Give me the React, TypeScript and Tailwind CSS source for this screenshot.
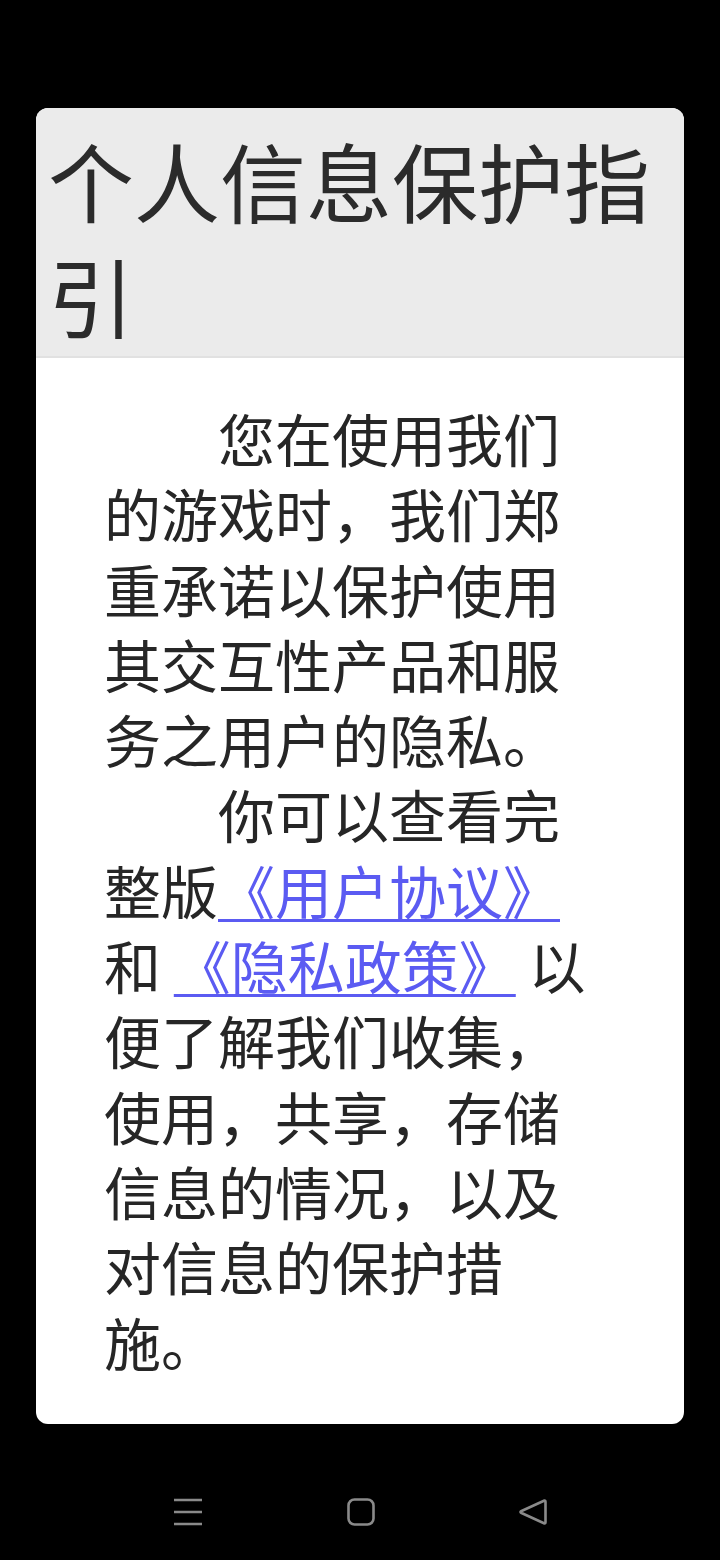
const cjk = "font-['Noto_Sans_CJK_SC','Noto_Sans',sans-serif]";

function NavBar() {
  return (
    <div className="flex items-center justify-center gap-[144px] pt-[74px]">
      <svg width="30" height="28" viewBox="0 0 30 28" fill="none" stroke="#8a8a8a" strokeWidth="2.6">
        <path d="M1 2h28M1 14h28M1 26h28" />
      </svg>
      <svg width="28" height="28" viewBox="0 0 28 28" fill="none" stroke="#8a8a8a" strokeWidth="2.6">
        <rect x="1.5" y="1.5" width="25" height="25" rx="6" />
      </svg>
      <svg width="28" height="28" viewBox="0 0 28 28" fill="none" stroke="#8a8a8a" strokeWidth="2.6" strokeLinejoin="round">
        <path d="M25.5 2.5 Q26.5 2.5 26.5 4 V24 Q26.5 25.5 25.5 25.5 L2 14.8 Q1 14 2 13.2 Z" />
      </svg>
    </div>
  );
}

export default function App() {
  return (
    <div className={`min-h-[1560px] bg-black ${cjk}`}>
      <div className="h-[108px]" />
      <div className="mx-[36px] overflow-hidden rounded-[12px] bg-white">
        <div className="border-b-[2px] border-[#e1e1e1] bg-[#ebebeb] px-[12px] pt-[14px] pb-[4px]">
          <h1 className="text-[86px] leading-[115px] font-normal text-[#2b2b2b]">
            个人信息保护指引
          </h1>
        </div>
        <div className="pl-[68px] pr-[72px] pt-[42px] pb-[45px] text-[57px] leading-[75.3px] text-[#262626]">
          <p className="indent-[2em]">
            您在使用我们的游戏时，我们郑重承诺以保护使用其交互性产品和服务之用户的隐私。
          </p>
          <p className="indent-[2em]">
            你可以查看完整版
            <a className="text-[#5b5bf2] underline decoration-[3px] underline-offset-[5px]">《用户协议》</a> 和{" "}
            <a className="text-[#5b5bf2] underline decoration-[3px] underline-offset-[5px]">《隐私政策》</a>{" "}
            以便了解我们收集，使用，共享，存储信息的情况，以及对信息的保护措施。
          </p>
        </div>
      </div>
      <NavBar />
    </div>
  );
}
